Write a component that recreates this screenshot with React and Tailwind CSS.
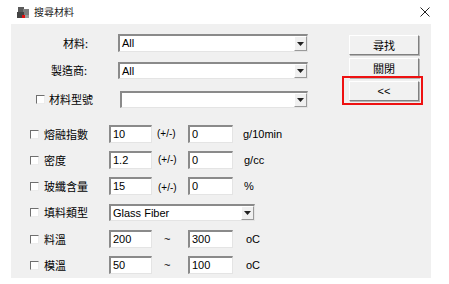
import React from "react";

const cjk = { fontFamily: '"Noto Sans CJK TC", "Noto Sans CJK SC", sans-serif' };
const latin = { fontFamily: '"Liberation Sans", Arial, sans-serif' };

function Sunken({ className = "", children }) {
  return (
    <div
      className={
        "flex items-center bg-white border-t-2 border-l-2 border-b border-r border-t-[#8a8a8a] border-l-[#8a8a8a] border-b-[#e4e4e4] border-r-[#e4e4e4] " +
        className
      }
    >
      {children}
    </div>
  );
}

function Arrow() {
  return (
    <div className="ml-auto h-full w-[13px] flex items-center justify-center bg-[#f0f0f0] border-l border-t border-l-white border-t-white border-r border-b border-r-[#9a9a9a] border-b-[#9a9a9a]">
      <svg width="7" height="4" viewBox="0 0 7 4">
        <path d="M0 0h7L3.5 4z" fill="#222" />
      </svg>
    </div>
  );
}

function Combo({ value, className = "" }) {
  return (
    <Sunken className={className}>
      <span className="pl-[2px] text-[11px] text-black leading-none" style={latin}>
        {value}
      </span>
      <Arrow />
    </Sunken>
  );
}

function Check() {
  return (
    <span className="block w-[9px] h-[9px] bg-white border-t border-l border-t-[#6f6f6f] border-l-[#6f6f6f] border-b border-r border-b-[#ececec] border-r-[#ececec]" />
  );
}

function Btn({ children, latinText }) {
  return (
    <div
      className="w-[70px] h-[20px] flex items-center justify-center bg-[#f1f1f1] border border-t-white border-l-white border-b-[#808080] border-r-[#808080] shadow-[1px_1px_0_#b5b5b5] text-[11px] text-black"
      style={latinText ? latin : cjk}
    >
      {children}
    </div>
  );
}

function Field({ value }) {
  return (
    <span className="pl-[2px] text-[11px] text-black leading-none" style={latin}>
      {value}
    </span>
  );
}

function Row({ label, a, mid, midPad, b, unit, unitGap, midSize }) {
  return (
    <div className="flex items-center h-[18px]">
      <div className="w-[33px] pl-[19px] flex items-center">
        <Check />
      </div>
      <span className="w-[65px] text-[11px] text-black leading-none" style={cjk}>
        {label}
      </span>
      <Sunken className="w-[43px] h-[18px]">
        <Field value={a} />
      </Sunken>
      <span
        className={"w-[36px] text-black leading-none " + midPad + " " + midSize}
        style={latin}
      >
        {mid}
      </span>
      <Sunken className="w-[45px] h-[18px]">
        <Field value={b} />
      </Sunken>
      <span className={"text-[11px] text-black leading-none " + unitGap} style={latin}>
        {unit}
      </span>
    </div>
  );
}

export default function App() {
  return (
    <div className="w-[449px] h-[284px] bg-white overflow-hidden">
      {/* title bar */}
      <div className="h-[24px] flex items-center">
        <svg className="ml-[17px]" width="13" height="13" viewBox="0 0 13 13">
          <rect x="1" y="1" width="6" height="5" fill="#5a5a5a" />
          <rect x="6" y="3" width="6" height="6" fill="#7d7d7d" />
          <rect x="0" y="6" width="7" height="6" fill="#444" />
          <rect x="8" y="9" width="4" height="3" fill="#9a9a9a" />
          <rect x="5" y="9" width="3" height="3" fill="#e01010" />
        </svg>
        <span className="ml-[4px] text-[10px] text-[#222] leading-none" style={cjk}>
          搜尋材料
        </span>
        <svg className="ml-auto mr-[19px]" width="10" height="10" viewBox="0 0 10 10">
          <path d="M0.5 0.5L9.5 9.5M9.5 0.5L0.5 9.5" stroke="#222" strokeWidth="1" />
        </svg>
      </div>

      {/* panel */}
      <div className="ml-[11px] w-[420px] h-[254px] bg-[#f0f0f0]">
        <div className="flex pt-[10px]">
          <div className="flex flex-col w-[297px]">
            <div className="flex items-center h-[18px]">
              <span className="w-[77px] text-right text-[11px] text-black leading-none" style={cjk}>
                材料:
              </span>
              <Combo value="All" className="ml-[30px] w-[190px] h-[18px]" />
            </div>
            <div className="flex items-center h-[17px] mt-[10px]">
              <span className="w-[76px] text-right text-[11px] text-black leading-none" style={cjk}>
                製造商:
              </span>
              <Combo value="All" className="ml-[31px] w-[190px] h-[17px]" />
            </div>
            <div className="flex items-center h-[17px] mt-[12px]">
              <div className="w-[38px] pl-[25px] flex items-center">
                <Check />
              </div>
              <span className="w-[71px] text-[11px] text-black leading-none" style={cjk}>
                材料型號
              </span>
              <Combo value="" className="w-[188px] h-[17px]" />
            </div>
          </div>

          <div className="ml-[41px] mt-[1px] flex flex-col gap-[3px]">
            <Btn>尋找</Btn>
            <Btn>關閉</Btn>
            <div className="relative">
              <Btn latinText>&lt;&lt;</Btn>
              <span className="absolute left-[-7px] top-[-5px] right-[-4px] bottom-[-4px] border-2 border-[#ee1111]" />
            </div>
          </div>
        </div>

        <div className="mt-[17px] flex flex-col">
          <Row label="熔融指數" a="10" mid="(+/-)" midPad="pl-[5px]" midSize="text-[10px]" b="0" unit="g/10min" unitGap="ml-[10px]" />
          <div className="mt-[8px]">
            <Row label="密度" a="1.2" mid="(+/-)" midPad="pl-[6px]" midSize="text-[10px]" b="0" unit="g/cc" unitGap="ml-[11px]" />
          </div>
          <div className="mt-[8px]">
            <Row label="玻纖含量" a="15" mid="(+/-)" midPad="pl-[6px] pt-[3px]" midSize="text-[10px]" b="0" unit="%" unitGap="ml-[11px]" />
          </div>
          <div className="mt-[9px] flex items-center h-[17px]">
            <div className="w-[33px] pl-[19px] flex items-center">
              <Check />
            </div>
            <span className="w-[65px] text-[11px] text-black leading-none" style={cjk}>
              填料類型
            </span>
            <Combo value="Glass Fiber" className="w-[146px] h-[17px]" />
          </div>
          <div className="mt-[9px]">
            <Row label="料溫" a="200" mid="~" midPad="pl-[12px]" midSize="text-[11px]" b="300" unit="oC" unitGap="ml-[13px]" />
          </div>
          <div className="mt-[8px]">
            <Row label="模溫" a="50" mid="~" midPad="pl-[12px]" midSize="text-[11px]" b="100" unit="oC" unitGap="ml-[13px]" />
          </div>
        </div>
      </div>
    </div>
  );
}
